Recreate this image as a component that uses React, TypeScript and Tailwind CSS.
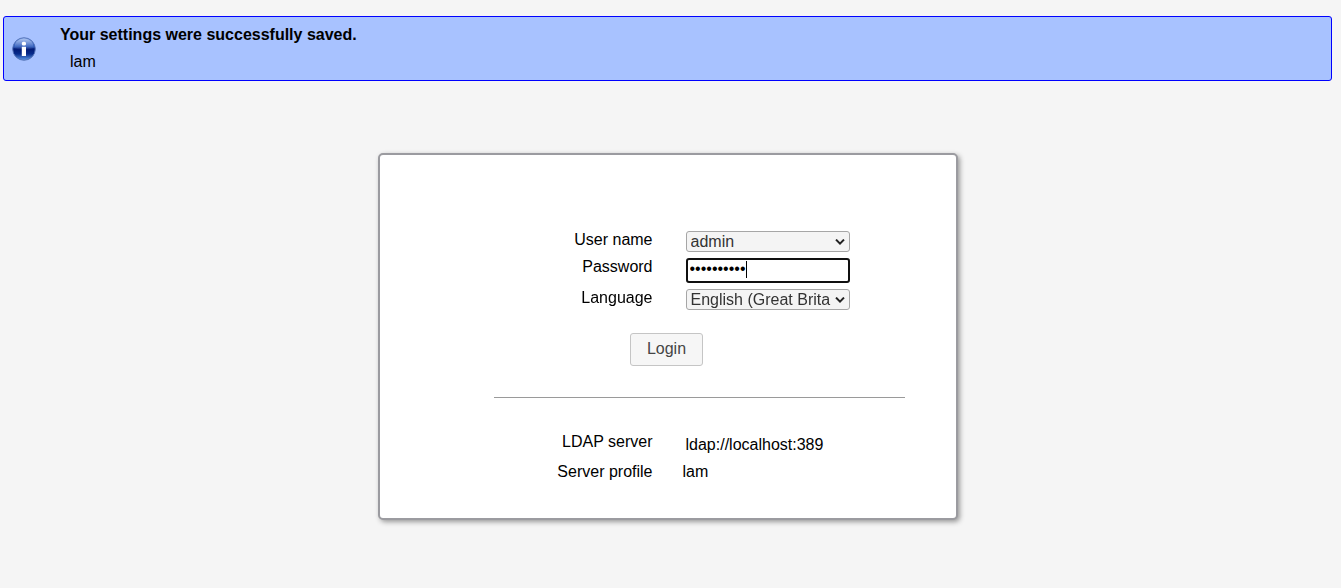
import { useState } from "react";

function InfoIcon() {
  return (
    <svg className="h-6 w-6 shrink-0" viewBox="0 0 24 24" aria-hidden="true">
      <defs>
        <linearGradient id="ball" x1="0" y1="0" x2="0" y2="1">
          <stop offset="0" stopColor="#7fa4ea" />
          <stop offset="0.4" stopColor="#1d4db4" />
          <stop offset="0.5" stopColor="#021a74" />
          <stop offset="0.72" stopColor="#082c8c" />
          <stop offset="1" stopColor="#5f9be8" />
        </linearGradient>
        <linearGradient id="gloss" x1="0" y1="0" x2="0" y2="1">
          <stop offset="0" stopColor="#ffffff" stopOpacity="0.4" />
          <stop offset="1" stopColor="#ffffff" stopOpacity="0.05" />
        </linearGradient>
      </defs>
      <circle cx="12" cy="12" r="11.3" fill="url(#ball)" stroke="#5572b4" strokeWidth="0.9" />
      <path d="M2 11a10 9.6 0 0 1 20 0q-10 3-20 0z" fill="url(#gloss)" />
      <rect x="9.8" y="4.7" width="4.2" height="3.8" rx="1.5" fill="#fff" />
      <rect x="9.8" y="9.7" width="4.2" height="9.3" rx="0.3" fill="#fff" />
    </svg>
  );
}

const label = "text-right leading-[18px]";

function Select({ id, options }: { id: string; options: string[] }) {
  return (
    <div className="grid items-center">
      <select
        id={id}
        className="col-start-1 row-start-1 h-[21px] w-full appearance-none rounded-[3px] border border-[#a6a6a6] bg-[#f4f4f4] pr-[18px] pl-1 leading-[18px] text-[#333333]"
      >
        {options.map((option) => (
          <option key={option}>{option}</option>
        ))}
      </select>
      <svg
        className="pointer-events-none col-start-1 row-start-1 mr-[5px] h-[6px] w-[10px] justify-self-end"
        viewBox="0 0 10 6"
        fill="none"
        stroke="#222222"
        strokeWidth="2"
        aria-hidden="true"
      >
        <path d="M1 0.6l4 4 4-4" />
      </svg>
    </div>
  );
}

export default function App() {
  const [password, setPassword] = useState("lamsecrets");

  return (
    <div className="min-h-screen bg-[#f5f5f5] pt-4 pr-[9px] pb-4 pl-[3px] font-['Liberation_Sans',Arial,sans-serif] text-base leading-[18px] text-black">
      <div
        role="status"
        className="flex items-center gap-6 rounded-[3px] border border-[#0000ff] bg-[#a8c2ff] px-2 py-[9px]"
      >
        <InfoIcon />
        <div>
          <p className="font-bold">Your settings were successfully saved.</p>
          <p className="mt-[9px] pl-[10px]">lam</p>
        </div>
      </div>

      <main className="mx-auto mt-[72px] w-full max-w-[580px] rounded-[5px] border-2 border-[#9b9ba0] bg-white pt-[76px] pb-[37px] shadow-[2px_2px_5px_#999999]">
        <form onSubmit={(event) => event.preventDefault()}>
          <div className="grid grid-cols-[273px_164px] gap-x-[33px] gap-y-[6px]">
            <label htmlFor="user" className={label}>User name</label>
            <Select id="user" options={["admin"]} />
            <label htmlFor="password" className={label}>Password</label>
            <div className="grid items-center">
              <input
                id="password"
                type="password"
                autoFocus
                value={password}
                onChange={(event) => setPassword(event.target.value)}
                className="peer col-start-1 row-start-1 h-[25px] w-full rounded-[3px] border-2 border-[#101010] bg-white px-[2px] pb-[3px] caret-transparent outline-none"
              />
              <span
                className="pointer-events-none invisible col-start-1 row-start-1 mb-[2px] ml-[60px] h-[17px] w-px bg-black peer-focus:visible"
                aria-hidden="true"
              />
            </div>
            <label htmlFor="language" className={label}>Language</label>
            <Select id="language" options={["English (Great Britain)"]} />
          </div>
          <div className="mt-[23px] flex justify-center pr-[2px]">
            <button
              type="submit"
              className="h-[33px] rounded-[3px] border border-[#c5c5c5] bg-[#f6f6f6] px-4 pb-[2px] text-[#454545]"
            >
              Login
            </button>
          </div>
        </form>

        <hr className="mt-[31px] mr-[51px] ml-[114px] border-t border-[#9a9a9a]" />

        <dl className="mt-[35px] grid grid-cols-[273px_1fr] gap-x-[30px] gap-y-[9px]">
          <dt className={label}>LDAP server</dt>
          <dd className="pt-[3px] pl-[3px]">ldap://localhost:389</dd>
          <dt className={label}>Server profile</dt>
          <dd>lam</dd>
        </dl>
      </main>
    </div>
  );
}
